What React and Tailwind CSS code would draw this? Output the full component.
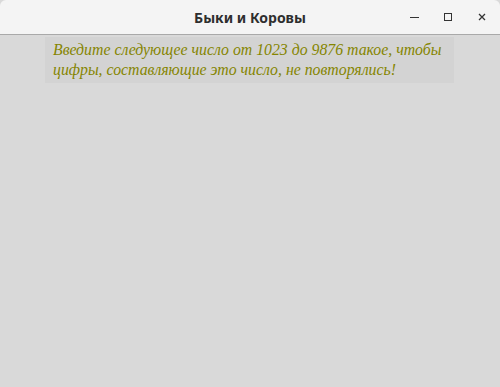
import React from 'react';

export default function App() {
    return (
        <div className="w-[500px] h-[387px] bg-[#d9d9d9] flex flex-col overflow-hidden">
            <div className="h-[35px] bg-[#f4f4f4] border-b border-[#a9a9a9] rounded-t-[6px] relative flex items-center justify-center shrink-0">
                <span className="text-[14px] font-bold text-[#2e2e2e] font-['Noto_Sans',sans-serif]">Быки и Коровы</span>
                <div className="absolute right-0 top-0 h-full flex items-center">
                    <div className="w-[36px] flex justify-center">
                        <div className="w-[9px] h-[1px] bg-[#333]" />
                    </div>
                    <div className="w-[32px] flex justify-center">
                        <div className="w-[8px] h-[8px] border border-[#333]" />
                    </div>
                    <div className="w-[36px] flex justify-center">
                        <svg width="8" height="8" viewBox="0 0 8 8">
                            <path d="M1 1L7 7M7 1L1 7" stroke="#333" strokeWidth="1.3" />
                        </svg>
                    </div>
                </div>
            </div>
            <div className="pt-[2px] pl-[45px]">
                <div className="w-[409px] h-[46px] bg-[#d3d3d3] pl-[8px] pr-[2px] pt-[3px] text-[15.8px] leading-[20px] italic text-[#858500] font-['Liberation_Serif',serif]">
                    Введите следующее число от 1023 до 9876 такое, чтобы цифры, составляющие это число, не повторялись!
                </div>
            </div>
        </div>
    );
}
